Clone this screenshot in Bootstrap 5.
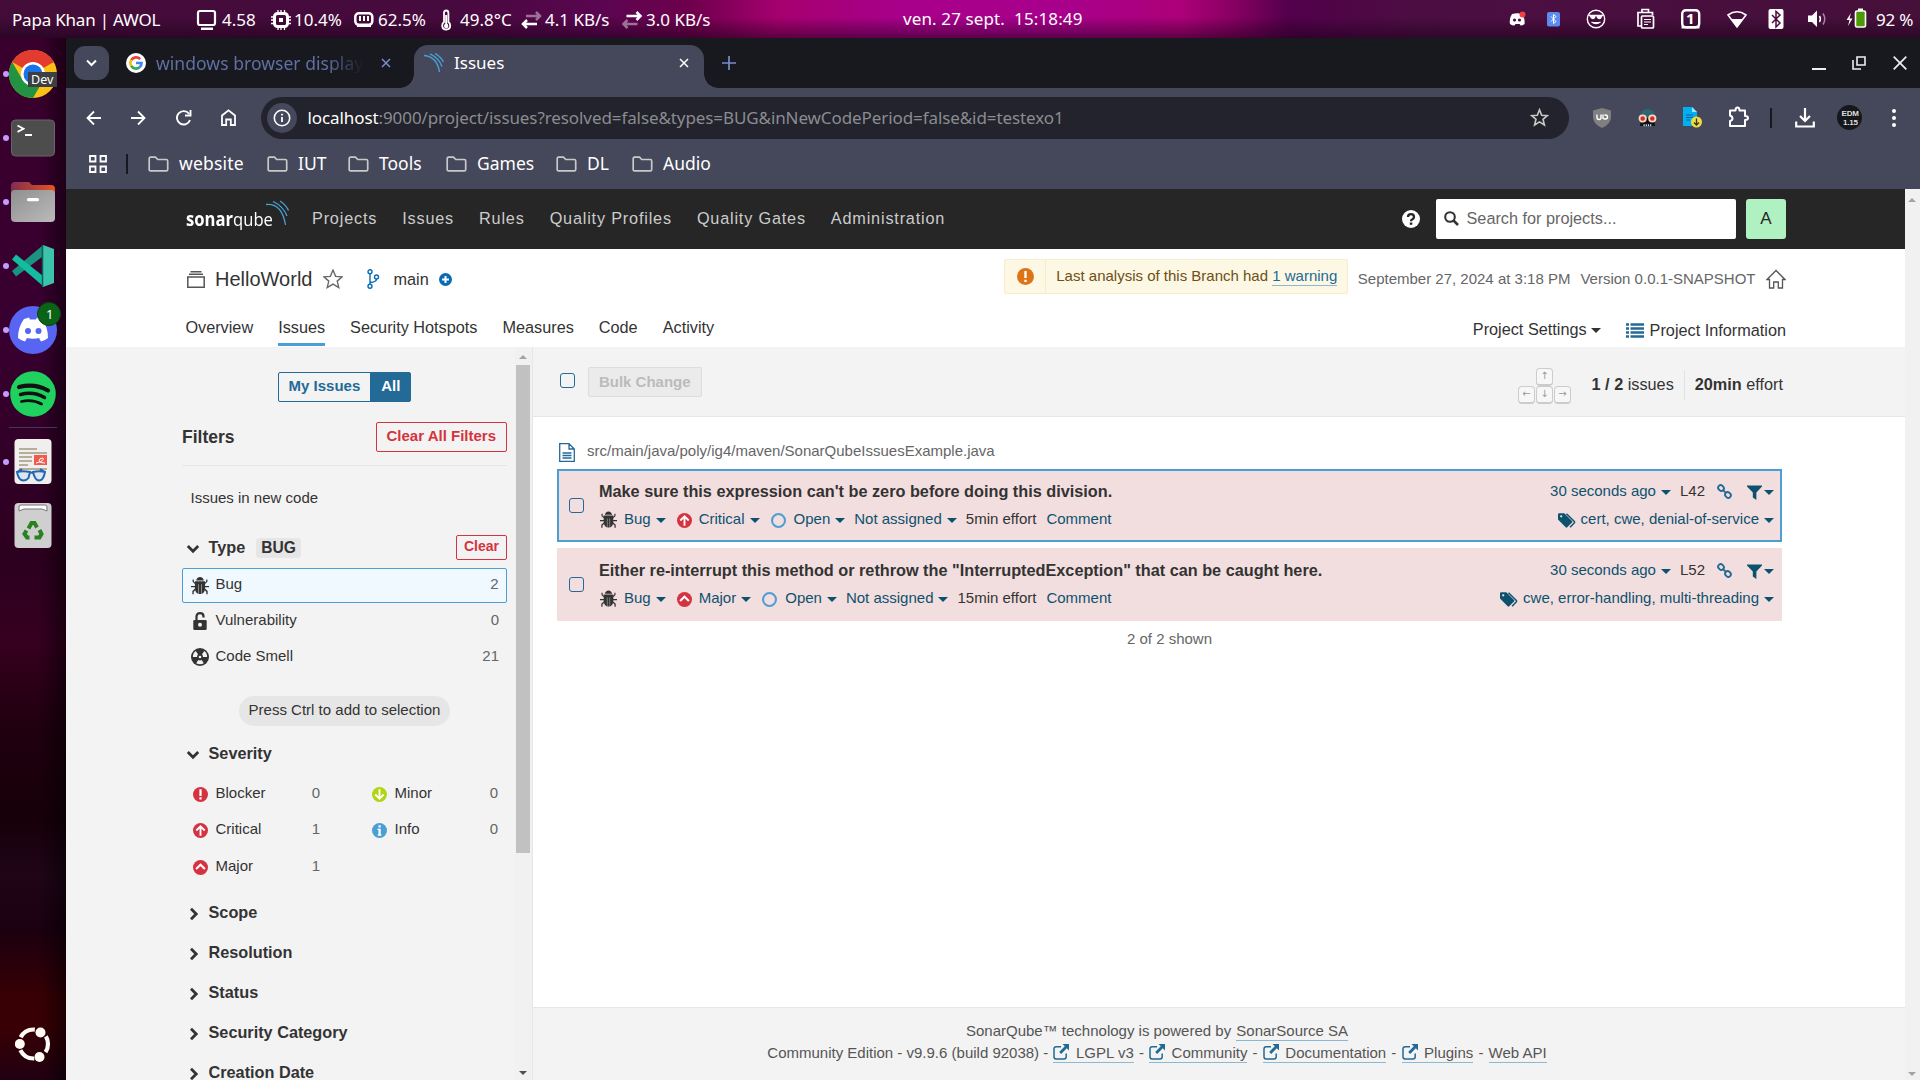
<!DOCTYPE html>
<html lang="en">
<head>
<meta charset="utf-8">
<title>Issues</title>
<link href="https://cdn.jsdelivr.net/npm/bootstrap@5.3.0/dist/css/bootstrap.min.css" rel="stylesheet">
<style>
*{box-sizing:border-box}
html,body{width:1920px;height:1080px;overflow:hidden}
body{font-family:"Liberation Sans",Arial,sans-serif;font-size:15px;line-height:20px;color:#333;background:#180010}
svg{display:block;flex:none}
a{color:#236a97;text-decoration:none}
.ui{font-family:"Noto Sans","Open Sans",sans-serif;font-size:17px;letter-spacing:-.2px}
.nw,.nw *{white-space:nowrap}
.desk{width:1920px;height:1080px}
/* system bar */
.sysbar{height:38px;color:#fff;background:linear-gradient(180deg,rgba(20,0,20,0) 45%,rgba(20,0,20,.5) 100%),linear-gradient(90deg,#430c38 0,#470a3e 460px,#5a0550 600px,#6e004c 690px,#a60070 780px,#a8008a 900px,#a8008c 1060px,#ad0078 1180px,#8a0064 1230px,#52004a 1290px,#4c0e42 1420px,#45103a 100%)}
.sb-name{width:185px;padding:1px 0 0 12px}
#metrics{padding-top:1px}
#metrics span{padding-left:1px;letter-spacing:0}
.clock{width:182px;letter-spacing:.12px}
/* dock */
.dock{width:66px;background:linear-gradient(90deg,rgba(0,0,0,0) 60%,rgba(0,0,0,.5) 100%),linear-gradient(180deg,#3a002d 0,#380030 300px,#2c001f 520px,#360020 600px,#20000f 690px,#170009 780px,#200518 840px,#1b0010 890px,#380004 960px,#380004 990px,#210012 100%);padding-top:12px}
.app{height:48px;margin-bottom:16px;padding-left:9px;position:relative}
.app.run::before{content:"";position:absolute;left:3px;top:21px;width:6px;height:6px;border-radius:50%;background:#c39bff}
.dock hr{margin:-7px 9px 10px;border:0;height:1px;background:#3e3a55;opacity:1}
/* browser */
.tabs{height:50px;background:#17191e;color:#fff}
.tabbtn{width:35px;height:34px;border-radius:11px;background:#45475a;margin:0 17px 0 8px}
.tabA{width:238px;margin-right:50px;color:#616fa3}
.tabA .ttl{width:210px;font-size:17.5px;letter-spacing:.05px;margin-top:-1px;-webkit-mask-image:linear-gradient(90deg,#000 82%,transparent 100%)}
.tabB{width:290px;height:43px;background:#45475a;border-radius:14px 14px 0 0;padding:0 15px 7px 10px;letter-spacing:0;position:relative}
.tabB::before,.tabB::after{content:"";position:absolute;bottom:0;width:14px;height:14px}
.tabB::before{left:-14px;background:radial-gradient(circle at 0 0,transparent 13.5px,#45475a 14px)}
.tabB::after{right:-14px;background:radial-gradient(circle at 100% 0,transparent 13.5px,#45475a 14px)}
.tools{height:59px;background:#45475a;padding-left:20px}
.navi{width:45px}
.omni{width:1308px;height:42px;border-radius:21px;background:#22232c;padding:0 20px 0 6px;margin-left:-5px;margin-right:24px}
.omni .inf{width:30px;height:30px;border-radius:50%;background:#45475a}
.omni .url{color:#8b8c91;margin-left:10.5px;letter-spacing:-.09px}
.exts>*{flex:none}
.marks{height:42px;background:#45475a;padding:0 0 9px 23px;color:#fff;line-height:24px;font-size:17.5px;letter-spacing:0}
.marks .nm{margin-top:-2px}
.vbar{width:2px;height:20px;background:#17191e}
.bk{gap:10px}
/* page */
.sq-nav{height:60px;background:#262626;padding:0 119px 0 120px;color:#ccc;font-size:16.25px;letter-spacing:.81px}
.sq-nav .links{gap:25px;margin-left:22px;padding-bottom:2px}
.wordmark{width:80px;font-family:"Open Sans","Noto Sans",sans-serif;font-size:19px;letter-spacing:0;color:#fff}
.wordmark span{display:inline-block;transform:scaleX(.875);transform-origin:0 50%}
.arcs{margin-top:-13px}
.sq-search{width:300px;height:40px;border-radius:2px;background:#fff;color:#666;letter-spacing:0;padding:0 9px 1px 8px;gap:8px}
.sq-ava{width:40px;height:40px;border-radius:3px;background:#b0f1c1;color:#262626;font-size:17px;letter-spacing:0;margin-left:10px}
.sq-head{height:98px;background:#fff;padding:0 119px 0 120px}
.sq-h1{height:60px}
.pname{font-size:20px;margin:0 11px 0 10px}
.f16{font-size:16.25px}
.warnbox{height:35px;border:1px solid #faebcc;border-radius:2px;background:#fcf8e3;color:#6f4f17;margin-top:-5px}
.warnbox .ic{width:41px;height:33px;border-right:1px solid #f6ecc8}
.warnbox .tx{padding:0 10px;padding-bottom:2px}
.ul{border-bottom:1px solid #8db8d4;padding-bottom:1px}
.gr{color:#666}
.sq-tabs{height:38px;gap:25px;font-size:16.25px;margin-left:-.6px}
.sq-tabs>span{height:37px;line-height:37px;border-bottom:3px solid transparent}
.sq-tabs>span.on{border-color:#4b9fd5}
.caret{width:0;height:0;border:5px solid transparent;border-top:5.5px solid #0e516f;border-bottom:0;margin:2px -1px 0 5px;display:inline-block;flex:none}
.caret.k{border-top-color:#333}
/* sidebar */
.side{width:467px;height:733px;background:#f3f3f3;border-right:1px solid #e6e6e6;overflow:hidden}
.side-in{width:325px;margin-left:116px}
.sbar{width:17px;background:#f1f1f1;margin-left:auto;height:733px;padding-top:8px}
.sbar .th{width:14px;height:488px;background:#c1c1c1;margin:6px 0 0 1px}
.aro{width:0;height:0;border:4.5px solid transparent;margin-left:4px}
.tgl{margin-top:25px;height:30px}
.tgl .b1,.tgl .b2{height:30px;border:1px solid #236a97;font-weight:700;line-height:26px;color:#236a97;padding:0 10px;border-radius:2px 0 0 2px}
.tgl .b2{background:#236a97;color:#fff;border-radius:0 2px 2px 0;margin-left:-1px}
.rbtn{height:30px;border:1px solid #d4333f;border-radius:2px;color:#d4333f;font-weight:700;line-height:26px;padding:0 10px}
.rbtn.sm{height:25px;line-height:21px;padding:0 7px;font-size:14px}
.fl-h{margin-top:20px;padding-bottom:13px;border-bottom:1px solid #e6e6e6;font-weight:700}
.fl-h .t{font-size:17.5px}
.fh{height:40px;font-weight:700;font-size:16.25px}
.fh .ch{width:26.5px;padding-left:4px}
.tagv{height:20px;background:#e6e6e6;border-radius:4px;padding:0 5px;margin-left:11px;line-height:19px;font-size:15.6px}
.innew{padding:22px 0 19px 8.5px}
.fi{height:36.3px;padding:0 8px 3px 8.5px}
.fi svg{margin-right:7px;margin-top:3px}
.fi .n{margin-left:auto;color:#666}
.fi.sel{height:35px;border:1px solid #4b9fd5;border-radius:2px;background:#f0f9ff;padding:0 7.5px 3px 7.5px}
.pill{height:30px;line-height:28px;border-radius:15px;background:#e6e6e6;margin:20px auto 0;width:211px;text-align:center}
.sev{height:109px;margin-top:4px}
.sev .c1{width:147px}
.sev .fi{height:36.2px;padding-right:9px}
.sev .fi svg{margin-left:2px;margin-right:8px}
.sev .c2{width:146px}
.fh .chv{margin:4px 0 0 -1px}
/* main */
.tbar{height:70px;background:#f3f3f3;border-bottom:1px solid #e6e6e6;padding:0 122px 0 27.4px}
.cb{width:15px;height:15px;border:1px solid #236a97;border-radius:3px;flex:none}
.bulk{height:30px;border:1px solid #ddd;background:#ebebeb;border-radius:2px;color:#bbb;font-weight:700;line-height:27px;padding:0 10px;margin-left:12.5px}
.kbds{margin-right:20.5px;margin-top:9px}
.kbd1{width:17px;height:18px;border:1px solid #ccc;border-bottom-width:2px;border-radius:4px;background:#f7f7f7;color:#999;font-size:10px;line-height:14px;text-align:center;font-family:"DejaVu Sans",sans-serif}
.vd{width:1px;height:30px;background:#e2e2e2}
.tbar .f16{padding-top:4px}
.issues{margin:0 123px 0 24px}
.pathrow{height:52px;padding:18px 0 0 2px;color:#666}
.issue{height:73px;background:#f2dede;margin-bottom:6px;border:2px solid #f2dede;color:#0e516f;padding:0 7px 0 10px}
.issue.sel{border-color:#4b9fd5}
.issue .bd{margin-left:15px;padding-bottom:1px}
.issue .ln1{height:28px}
.issue .ln1 .msg{font-size:16.25px;font-weight:700;color:#333}
.issue .ln2{height:28px}
.dk{color:#333}
.foot{height:73px;border-top:1px solid #e6e6e6;background:#f3f3f3;color:#555;padding:12px 123px 0 0;line-height:22px;margin-top:auto}
.foot a{display:inline-block;line-height:18px;border-bottom:1px solid #8db8d4;margin:0 1px}
.foot svg{display:inline-block;vertical-align:-2px;margin-right:6.5px}
.pscroll{width:15px;background:#f1f1f1;padding-top:9px}
</style>
<script src="https://cdn.jsdelivr.net/npm/bootstrap@5.3.0/dist/js/bootstrap.bundle.min.js"></script>
</head>
<body>
<svg width="0" height="0" class="position-absolute">
<defs>
<symbol id="bug" viewBox="0 0 16 16"><path fill="#333" d="M8 0C6.300 0 4.900 1.300 4.600 3h6.800C11.100 1.300 9.700 0 8 0zM3.500 3.700h9v1.200l1-1V2.200h1.100v2.100L12.500 6.300v1.600H16v1.200h-3.500v1.200l2.300 2.200v2.900h-1.200v-2.400l-1.400-1.200c-.3 1.500-1.200 2.600-2.700 3.200V6.500H9.100V15H6.900V6.500H6.500v8.500c-1.500-.6-2.400-1.700-2.700-3.200l-1.400 1.200v2.400H1.200v-2.900l2.300-2.200V9.100H0V7.900h3.500V6.300L1.400 4.300V2.200h1.100v1.700l1 1z"/></symbol>
<symbol id="crit" viewBox="0 0 16 16"><circle cx="8" cy="8" r="8" fill="#d4333f"/><path d="M8 13.500V4M3.500 8 8 3.600 12.500 8" fill="none" stroke="#fff" stroke-width="2"/></symbol>
<symbol id="major" viewBox="0 0 16 16"><circle cx="8" cy="8" r="8" fill="#d4333f"/><path d="M3.300 9.600 8 5l4.700 4.600" fill="none" stroke="#fff" stroke-width="2.200"/></symbol>
<symbol id="blocker" viewBox="0 0 16 16"><circle cx="8" cy="8" r="8" fill="#d4333f"/><path d="M6.800 2.500h2.400V9.500H6.800zM6.800 11h2.400v2.400H6.800z" fill="#fff"/></symbol>
<symbol id="minor" viewBox="0 0 16 16"><circle cx="8" cy="8" r="8" fill="#b0d513"/><path d="M8 2.500V12M3.500 8 8 12.400 12.500 8" fill="none" stroke="#fff" stroke-width="2"/></symbol>
<symbol id="info" viewBox="0 0 16 16"><circle cx="8" cy="8" r="8" fill="#4b9fd5"/><path d="M6.900 2.500h2.400v2.300H6.900zM5.800 6h3.500v6H10v1.500H6.200V12h.7V7.400H5.800z" fill="#fff"/></symbol>
<symbol id="link" viewBox="0 0 16 16"><g fill="none" stroke="#236a97" stroke-width="2"><rect x="-3.200" y="-2.700" width="6.400" height="5.400" rx="2.700" transform="translate(4.300 4.300) rotate(45)"/><rect x="-3.200" y="-2.700" width="6.400" height="5.400" rx="2.700" transform="translate(11.700 11.700) rotate(45)"/><path d="M6 6l4 4"/></g></symbol>
<symbol id="filt" viewBox="0 0 16 16"><path fill="#0e516f" d="M0 .5h16v1.200L10 7.900V16l-3.800-2.600V7.900L0 1.700z"/></symbol>
<symbol id="tags" viewBox="0 0 18 15"><path fill="#0e516f" d="M0 1.400Q0 .3 1.100.3H6.300L14 8a1 1 0 0 1 0 1.500l-4.800 4.800a1 1 0 0 1-1.500 0L0 6.500zM3.200 2.200a1.100 1.100 0 1 0 0 2.300 1.100 1.100 0 0 0 0-2.300z" fill-rule="evenodd"/><path fill="none" stroke="#0e516f" stroke-width="1.400" d="M8.500.8l7.900 7.600q.6.700 0 1.300l-4.300 4.500"/></symbol>
<symbol id="ext" viewBox="0 0 16 16"><path d="M8 2.800H3.200Q1 2.800 1 5v7.800Q1 15 3.200 15H11q2.200 0 2.200-2.200V9.500" fill="none" stroke="#236a97" stroke-width="1.500"/><path fill="#236a97" d="M9.500 0H16v6.500l-2.200-2.200-5.600 5.600-2-2 5.600-5.700z"/></symbol>
<symbol id="chd" viewBox="0 0 14 10"><path d="M1.800 2 7 7.200 12.200 2" fill="none" stroke="#333" stroke-width="2.800"/></symbol>
<symbol id="chr" viewBox="0 0 10 14"><path d="M2 1.800 7.200 7 2 12.200" fill="none" stroke="#333" stroke-width="2.800"/></symbol>
<symbol id="fold" viewBox="0 0 21 16"><path d="M1.200 2.500Q1.200 1.200 2.500 1.200H7.500l2.200 2.300h8.600q1.400 0 1.400 1.400v8.500q0 1.400-1.400 1.400H2.500q-1.300 0-1.300-1.400z" fill="none" stroke="#c9c9c9" stroke-width="1.700"/></symbol>
<symbol id="xx" viewBox="0 0 10 10"><path d="M1 1l8 8M9 1 1 9" stroke="currentColor" stroke-width="1.500" fill="none"/></symbol>
<symbol id="opn" viewBox="0 0 16 16"><circle cx="8" cy="8" r="6.900" fill="none" stroke="#4b9fd5" stroke-width="2.200"/></symbol>
</defs></svg>

<div class="desk d-flex flex-column nw">
<header class="sysbar ui d-flex align-items-center position-relative">
  <div class="sb-name">Papa Khan | AWOL</div>
  <div class="d-flex align-items-center" id="metrics">
    <svg class="ms-2 ps-0" width="28" height="22" viewBox="0 0 28 22"><path d="M7 2h13q2 0 2 2v10q0 2-2 2H7q-2 0-2-2V4q0-2 2-2z" fill="none" stroke="#fff" stroke-width="2.200"/><path d="M8 18.500h12v2.500H8z" fill="#fff"/></svg>
    <span style="width:49px">4.58</span>
    <svg width="23" height="22" viewBox="0 0 23 22"><rect x="4.500" y="4.500" width="13" height="13" rx="3" fill="none" stroke="#fff" stroke-width="3"/><rect x="9" y="9" width="4" height="4" fill="#fff"/><path d="M8 1v3M8 18v3M11 1v3M11 18v3M14.500 1v3M14.500 18v3M1 8h3M1 11h3M1 14.500h3M18 8h3M18 11h3M18 14.500h3" stroke="#fff" stroke-width="1.300"/></svg>
    <span style="width:61px">10.4%</span>
    <svg width="23" height="22" viewBox="0 0 23 22"><rect x="1.300" y="4.300" width="17" height="11.500" rx="3.500" fill="none" stroke="#fff" stroke-width="2.500"/><path d="M6 7v5M10 7v5M14 7v5M3 17h14" stroke="#fff" stroke-width="2"/></svg>
    <span style="width:63px">62.5%</span>
    <svg width="19" height="22" viewBox="0 0 19 22"><path d="M4 4q0-2.500 2.200-2.500T8.400 4v9q1.800 1.300 1.800 3.500 0 4-4 4t-4-4Q2.200 14.300 4 13z" fill="none" stroke="#fff" stroke-width="1.800"/><path d="M6.200 6v11" stroke="#fff" stroke-width="2"/><circle cx="6.200" cy="17" r="2.200" fill="#fff"/></svg>
    <span style="width:62px">49.8°C</span>
    <svg width="23" height="22" viewBox="0 0 23 22"><path d="M5 7h14M15 3l4 4-4 4" fill="none" stroke="#9b7296" stroke-width="2.500"/><path d="M16 15H2M6 11l-4 4 4 4" fill="none" stroke="#fff" stroke-width="2.500"/></svg>
    <span style="width:77px">4.1 KB/s</span>
    <svg width="24" height="22" viewBox="0 0 23 22"><path d="M5 7h14M15 3l4 4-4 4" fill="none" stroke="#fff" stroke-width="2.500"/><path d="M16 15H2M6 11l-4 4 4 4" fill="none" stroke="#9b7296" stroke-width="2.500"/></svg>
    <span style="width:258px">3.0 KB/s</span>
  </div>
  <div class="clock">ven. 27 sept. &nbsp;15:18:49</div>
  <svg class="ms-auto" width="367" height="38" viewBox="0 0 367 38">
    <path d="M3 14q6-1.500 10 0 3 4 2.600 10-2 1.500-4 1.500l-1-1.500H6.500l-1 1.500q-2.500 0-4.500-1.500Q0 19 3 14z" fill="#fff"/><circle cx="5.500" cy="20" r="1.600" fill="#4b0c3e"/><circle cx="10.500" cy="20" r="1.600" fill="#4b0c3e"/><circle cx="13.500" cy="14.500" r="3" fill="#f23f42"/>
    <rect x="38" y="12" width="13" height="14.500" rx="2" fill="#5b8bf0"/><path d="M42 16.500l5 5-2.500 2v-9l2.500 2-5 5" stroke="#fff" fill="none"/>
    <circle cx="87" cy="19" r="8.700" fill="none" stroke="#fff" stroke-width="1.400"/><path d="M80 15.500h14M81.500 16h4.500q-.3 2.500-2.200 2.500T81.500 16zM88 16h4.500q-.3 2.500-2.200 2.500T88 16zM82.500 22q4.500 3 9 0" fill="#fff" stroke="#fff" stroke-width="1.300"/>
    <path d="M133 26h-4V12.500h14.500V15M133 12V9.500h6.500V12" fill="none" stroke="#fff" stroke-width="1.700"/><rect x="132.500" y="16" width="12" height="12" rx="1" fill="none" stroke="#fff" stroke-width="1.700"/><path d="M135 19.500h7M135 22h7M135 24.500h4" stroke="#fff" stroke-width="1.200"/>
    <rect x="173.200" y="10.200" width="17" height="17" rx="3.500" fill="none" stroke="#fff" stroke-width="2.400"/><path d="M172.500 26h18v2.500h-18z" fill="#fff"/><text x="177" y="24" font-size="15" font-family="Noto Sans" font-weight="700" fill="#fff">1</text>
    <path d="M219 15q9-6.500 18 0L228 27z" fill="none" stroke="#fff" stroke-width="1.600"/><path d="M222.500 19h11L228 27z" fill="#fff"/>
    <rect x="259.500" y="9" width="15" height="20" rx="2" fill="#fff"/><path d="M263 15l8 8-4 4V11.500l4 3.500-8 8" fill="none" stroke="#4b0c3e" stroke-width="1.500"/>
    <path d="M299 15.500h4l5-5V27l-5-5h-4z" fill="#fff"/><path d="M310.500 16q1.800 3 0 6" stroke="#fff" fill="none" stroke-width="1.500"/><path d="M314 13.500q3.500 5.500 0 11" stroke="#a884a2" fill="none" stroke-width="1.500"/>
    <path d="M342 13l-4.500 7h3l-1.500 6 4.500-7.500h-3z" fill="#fff"/><rect x="346.500" y="11" width="10" height="16" rx="1.500" fill="#4e9a06" stroke="#fff" stroke-width="1.600"/><path d="M349 8.500h5V11h-5z" fill="#fff"/>
  </svg>
  <span style="width:44px;margin-top:1px">92 %</span>
</header>

<div class="d-flex flex-grow-1">
<aside class="dock d-flex flex-column">
  <div class="app run"><svg width="48" height="48" viewBox="0 0 48 48"><circle cx="24" cy="24" r="24" fill="#fbc116"/><path d="M24 24 3.200 12A24 24 0 0 1 44.800 12z" fill="#e33b2e"/><path d="M3.200 12A24 24 0 0 0 24 48L34.400 30H13.600z" fill="#229342"/><path d="M24 12h21" stroke="#e33b2e"/><circle cx="24" cy="24" r="12" fill="#fff"/><circle cx="24" cy="24" r="9.500" fill="#1a73e8"/><rect x="19" y="22" width="29" height="15" fill="#3c4043"/><text x="22" y="34" font-family="Noto Sans" font-size="12.500" fill="#fff">Dev</text></svg></div>
  <div class="app run"><svg width="48" height="48" viewBox="0 0 48 48"><rect x="2.500" y="6" width="43" height="36" rx="4" fill="#4d4d4d" stroke="#666"/><path d="M8.500 11.500l6 3.200-6 3.200M16 21h7" fill="none" stroke="#fff" stroke-width="1.800"/></svg></div>
  <div class="app run"><svg width="48" height="48" viewBox="0 0 48 48"><linearGradient id="fo"><stop stop-color="#7e2f52"/><stop offset="1" stop-color="#e95420"/></linearGradient><path d="M2 8q0-4 4-4h14l3 3h19q4 0 4 4v14H2z" fill="url(#fo)"/><linearGradient id="fg" x2="1" y2="1"><stop stop-color="#8f8f8f"/><stop offset="1" stop-color="#bbb"/></linearGradient><rect x="2" y="12" width="44" height="32" rx="4" fill="url(#fg)"/><rect x="18" y="20" width="12" height="3.200" rx="1.500" fill="#fff"/></svg></div>
  <div class="app run"><svg width="48" height="48" viewBox="0 0 48 48"><path d="M3 29l4 5.500L33 15V4z" fill="#1a9480"/><path d="M3 17.500l4-5L34 34v10z" fill="#12bda0"/><path d="M34 3l11 4v34l-11 4z" fill="#3cc3ac"/><path d="M33.500 3v42" stroke="#0b5f55" stroke-width="1.500"/></svg></div>
  <div class="app run"><svg width="54" height="54" viewBox="0 -6 54 54" style="margin-top:-6px"><circle cx="24" cy="24" r="24" fill="#5865f2"/><path d="M15 13q3-1 5-1.500l1 2h6l1-2q2.500.5 5 1.500 6 8 6 19-3 2.500-7 3.500l-2-3.500q-6 1.500-12 0l-2 3.500q-4-1-7-3.500 0-11 6-19z" fill="#fff"/><circle cx="19" cy="25" r="3" fill="#5865f2"/><circle cx="29.500" cy="25" r="3" fill="#5865f2"/><circle cx="40" cy="8" r="11.500" fill="#0a6317" stroke="#0a4512"/><text x="37" y="13" font-family="Noto Sans" font-size="13" fill="#fff">1</text></svg></div>
  <div class="app run"><svg width="48" height="48" viewBox="0 0 48 48"><circle cx="24" cy="24" r="22.800" fill="#1fd15e"/><g fill="none" stroke="#121212" stroke-linecap="round"><path d="M10 17q16-4 29 3.500" stroke-width="4.200"/><path d="M11.500 24.500q13-3.500 24 3" stroke-width="3.500"/><path d="M12.500 31.500q11-2.500 20 2.500" stroke-width="2.800"/></g></svg></div>
  <hr>
  <div class="app run"><svg width="48" height="48" viewBox="0 0 48 48"><rect x="5.500" y="1" width="37" height="45" rx="4" fill="#f0efee"/><path d="M10 11h18M10 15h28M10 19h13M10 23h13M10 27h9M10 31h28" stroke="#b5ae9b" stroke-width="1.800"/><rect x="25" y="17" width="13" height="10" fill="#f25a50"/><path d="M27 25q9-2 7-5-4 0-4 3 0 2 6 2" fill="none" stroke="#fff"/><path d="M8 34q6-1.500 13 0l-1.500 6q-2 2.500-5 2.500-5 0-6.500-8.500zM24 34q6-1.500 12 0-1.500 8.500-6 8.500-4 0-6-8.500zM20 35q2-1 4 0M8 34l5-3M36 34l-5-3" fill="#dde6ef" stroke="#2367b3" stroke-width="2"/></svg></div>
  <div class="app"><svg width="48" height="48" viewBox="0 0 48 48"><rect x="5.500" y="1" width="37" height="45" rx="4" fill="#cfcfcf"/><path d="M10 9V5q0-2 2-2h24q2 0 2 2v4l-5-2H15z" fill="#fff" stroke="#777"/><g fill="none" stroke="#27821f" stroke-width="4"><path d="M19.500 26.500l3-5.500h3l2.500 4.500M30.500 28l2 4-2 3.500h-5M20.500 35.500h-2.500l-2.500-3.500 2-3.500"/></g></svg></div>
  <div class="mt-auto" style="padding:0 0 18px 15px"><svg width="36" height="36" viewBox="0 0 36 36"><circle cx="18.500" cy="18" r="14.500" fill="none" stroke="#fffcf5" stroke-width="4.200" stroke-dasharray="17 13.370" stroke-dashoffset="8.500"/><g fill="#fffcf5"><circle cx="4.800" cy="18" r="5"/><circle cx="25.500" cy="6.500" r="5"/><circle cx="24.500" cy="31" r="5"/></g></svg></div>
</aside>

<section class="d-flex flex-column flex-grow-1">
  <div class="tabs ui d-flex align-items-center">
    <div class="tabbtn d-flex align-items-center justify-content-center"><svg width="11" height="8" viewBox="0 0 11 8"><path d="M1 1.500 5.500 6 10 1.500" fill="none" stroke="#fff" stroke-width="2"/></svg></div>
    <div class="tabA d-flex align-items-center"><svg width="20" height="20" viewBox="0 0 20 20"><circle cx="10" cy="10" r="10" fill="#fff"/><g fill="none" stroke-width="2.600"><path d="M14.200 6.200A5.600 5.600 0 0 0 5.200 7.200" stroke="#ea4335"/><path d="M5.200 7.200a5.600 5.600 0 0 0 0 5.600" stroke="#fbbc05"/><path d="M5.200 12.800A5.600 5.600 0 0 0 13.600 14.300" stroke="#34a853"/><path d="M13.600 14.300Q15.600 12.700 15.600 10H10" stroke="#4285f4"/></g></svg><span class="ttl" style="margin-left:10px">windows browser display</span></div>
    <svg style="margin-left:-33px;margin-right:23px;color:#7a8bd0" width="10" height="10"><use href="#xx"/></svg>
    <div class="tabB d-flex align-items-center align-self-end"><svg width="20" height="20" viewBox="0 0 20 20"><path d="M0 2.500Q13 3.500 15.500 19M6 .8Q15 5 18 13.500M11 .5Q17 4 19.500 9" fill="none" stroke="#4b9fd5" stroke-width="1.400"/></svg><span style="margin-left:10px">Issues</span><svg class="ms-auto" width="10" height="10"><use href="#xx"/></svg></div>
    <svg style="margin-left:18px" width="14" height="14" viewBox="0 0 14 14"><path d="M7 0v14M0 7h14" stroke="#7a8bd0" stroke-width="1.700"/></svg>
    <div class="ms-auto d-flex align-items-center" style="padding-right:13px"><svg width="14" height="14"><path d="M0 13h14" stroke="#eee" stroke-width="2"/></svg><svg style="margin:0 27px 0 26px" width="14" height="14" viewBox="0 0 14 14"><path d="M5 1h8v8H5zM1 4v9h8" fill="none" stroke="#eee" stroke-width="1.600"/></svg><svg width="14" height="14" viewBox="0 0 10 10"><path d="M.5.5l9 9M9.500.5l-9 9" stroke="#eee" stroke-width="1.200"/></svg></div>
  </div>
  <div class="tools ui d-flex align-items-center text-white">
    <div class="navi"><svg width="15" height="16" viewBox="0 0 15 16"><path d="M15 8H1.500M8 1.500 1.500 8 8 14.500" fill="none" stroke="#fff" stroke-width="1.800"/></svg></div>
    <div class="navi"><svg width="15" height="16" viewBox="0 0 15 16"><path d="M0 8h13.500M7 1.500 13.500 8 7 14.500" fill="none" stroke="#fff" stroke-width="1.800"/></svg></div>
    <div class="navi"><svg width="16" height="16" viewBox="0 0 16 16"><path d="M14 10A6.700 6.700 0 1 1 13 3.800M14.500 0v5.500H9" fill="none" stroke="#fff" stroke-width="1.900"/></svg></div>
    <div class="navi"><svg width="15" height="17" viewBox="0 0 15 17"><path d="M1 6.500 7.500 1.300 14 6.500V16H9.800v-5.500H5.200V16H1z" fill="none" stroke="#fff" stroke-width="1.800"/></svg></div>
    <div class="omni d-flex align-items-center"><span class="inf d-flex align-items-center justify-content-center"><svg width="18" height="18" viewBox="0 0 18 18"><circle cx="9" cy="9" r="7.700" fill="none" stroke="#fff" stroke-width="1.600"/><path d="M9 8v5M9 4.800v1.800" stroke="#fff" stroke-width="1.800"/></svg></span><span class="url"><span class="text-white">localhost</span>:9000/project/issues?resolved=false&amp;types=BUG&amp;inNewCodePeriod=false&amp;id=testexo1</span><svg class="ms-auto" width="19" height="19" viewBox="0 0 19 19"><path d="M9.500 1.800l2.200 5.400 5.700.4-4.400 3.700 1.400 5.700-4.900-3.100L4.600 17 6 11.300 1.600 7.600l5.700-.4z" fill="none" stroke="#c9c9c9" stroke-width="1.600"/></svg></div>
    <div class="d-flex align-items-center exts">
      <svg width="18" height="20" viewBox="0 0 18 20"><path d="M9 0l9 2.500V9q0 7-9 11Q0 16 0 9V2.500z" fill="#808080"/><path d="M4 6.500v3q0 2 2 2t2-2v-3M10 6.500v4.500M11.500 7h1q2 0 2 2t-2 2h-2" fill="none" stroke="#fff" stroke-width="1.400"/></svg>
      <svg style="margin-left:27px" width="19" height="20" viewBox="0 0 19 20"><path d="M2 9q0-8 7.500-8T17 9z" fill="#2f6475"/><path d="M3 10h13l1 8H2z" fill="#111"/><circle cx="4.700" cy="10.500" r="3.200" fill="#d32f2f" stroke="#f5d9c0" stroke-width="1.800"/><circle cx="14.300" cy="10.500" r="3.200" fill="#d32f2f" stroke="#f5d9c0" stroke-width="1.800"/><path d="M5.500 17.300h8" stroke="#bfe8f0" stroke-width="2" stroke-dasharray="1.200 1"/></svg>
      <svg style="margin-left:26px" width="20" height="22" viewBox="0 0 20 22"><path d="M0 0h9l5 5v14H0z" fill="#00b0f5"/><path d="M9 0l5 5H9z" fill="#9be4ff"/><path d="M3 8h7M3 10.500h7M3 13h4" stroke="#0d5f96" stroke-width="1.200"/><circle cx="13.500" cy="15" r="5.500" fill="#f4dc3a"/><path d="M13.500 11.500v6M11 15.500l2.500 2.500 2.500-2.500" fill="none" stroke="#333" stroke-width="1.300"/></svg>
      <svg style="margin-left:25px;margin-top:-2px" width="21" height="22" viewBox="0 0 21 22"><path d="M2 4.500h5.500Q7.500 1.500 9.500 1.500t2 3H17v5.500q3 0 3 2t-3 2v6H2v-5q2.500-.5 2.500-2.500T2 9.500z" fill="none" stroke="#fff" stroke-width="2" stroke-linejoin="round"/></svg>
      <span class="vbar" style="margin:0 23px 0 21px"></span>
      <svg width="20" height="20" viewBox="0 0 20 20"><path d="M10 0v13M5 8l5 5 5-5M1.200 13.500V18.500H18.800V13.500" fill="none" stroke="#fff" stroke-width="2.200"/></svg>
      <svg style="margin-left:22px" width="25" height="25" viewBox="0 0 25 25"><circle cx="12.500" cy="12.500" r="12.500" fill="#16171a"/><g font-family="Liberation Sans" font-weight="700" font-size="8" fill="#ddd"><text x="4.500" y="11">EDM</text><text x="6" y="20">1.15</text></g></svg>
      <svg style="margin-left:30px" width="4" height="18" viewBox="0 0 4 18"><g fill="#fff"><circle cx="2" cy="2" r="2"/><circle cx="2" cy="9" r="2"/><circle cx="2" cy="16" r="2"/></g></svg>
    </div>
  </div>
  <div class="marks ui d-flex align-items-center">
    <svg width="18" height="18" viewBox="0 0 18 18"><path d="M1 1h5.500v5.500H1zM11.500 1H17v5.500h-5.500zM1 11.500h5.500V17H1zM11.500 11.500H17V17h-5.500z" fill="none" stroke="#fff" stroke-width="1.800"/></svg>
    <span class="vbar" style="margin:0 20px 0 19px"></span>
    <span class="d-flex align-items-center bk" style="width:119px"><svg width="21" height="16"><use href="#fold"/></svg><span class="nm" style="letter-spacing:.2px">website</span></span>
    <span class="d-flex align-items-center bk" style="width:81px"><svg width="21" height="16"><use href="#fold"/></svg><span class="nm">IUT</span></span>
    <span class="d-flex align-items-center bk" style="width:98px"><svg width="21" height="16"><use href="#fold"/></svg><span class="nm">Tools</span></span>
    <span class="d-flex align-items-center bk" style="width:110px"><svg width="21" height="16"><use href="#fold"/></svg><span class="nm">Games</span></span>
    <span class="d-flex align-items-center bk" style="width:76px"><svg width="21" height="16"><use href="#fold"/></svg><span class="nm">DL</span></span>
    <span class="d-flex align-items-center bk"><svg width="21" height="16"><use href="#fold"/></svg><span class="nm">Audio</span></span>
  </div>

  <div class="d-flex flex-grow-1">
  <div class="flex-grow-1">
    <nav class="sq-nav d-flex align-items-center">
      <div class="wordmark"><span><b>sonar</b>qube</span></div>
      <svg class="arcs" width="24" height="26" viewBox="0 0 24 26"><path d="M0 4.500Q16 3 19.500 25M7 1.500Q17 6 21 16M14 1Q20 5 22.500 10.500" fill="none" stroke="#4b9fd5" stroke-width="1.300"/></svg>
      <div class="d-flex links"><span>Projects</span><span>Issues</span><span>Rules</span><span>Quality Profiles</span><span>Quality Gates</span><span>Administration</span></div>
      <svg class="ms-auto" style="margin-right:16px" width="18" height="18" viewBox="0 0 18 18"><circle cx="9" cy="9" r="9" fill="#fff"/><path d="M6 7Q6 4.200 9 4.200T12 7q0 1.500-1.600 2.300Q9 10 9 11.300" fill="none" stroke="#262626" stroke-width="2.300"/><rect x="7.800" y="12.500" width="2.500" height="2.300" fill="#262626"/></svg>
      <div class="sq-search d-flex align-items-center"><svg width="15" height="15" viewBox="0 0 15 15"><circle cx="6" cy="6" r="4.800" fill="none" stroke="#333" stroke-width="2.100"/><path d="M9.500 9.500l4.500 4.500" stroke="#333" stroke-width="2.500"/></svg><span style="margin:-1px 0 0 -.5px">Search for projects...</span></div>
      <div class="sq-ava d-flex align-items-center justify-content-center">A</div>
    </nav>
    <div class="sq-head">
      <div class="sq-h1 d-flex align-items-center">
        <svg style="margin-left:1px" width="18" height="17" viewBox="0 0 18 17"><path d="M.8 6h16.400v10.200H.8zM2 3.300h14M3.500.8h11" fill="none" stroke="#555" stroke-width="1.500"/></svg>
        <span class="pname">HelloWorld</span>
        <svg width="20" height="20" viewBox="0 0 19 19"><path d="M9.500 1l2.500 6 6.200.5-4.700 4 1.500 6.200-5.500-3.300L4 17.700l1.500-6.200-4.700-4L7 7z" fill="none" stroke="#666" stroke-width="1.300"/></svg>
        <svg style="margin-left:23px" width="14" height="20" viewBox="0 0 14 20"><g fill="none" stroke="#0a6bb5" stroke-width="1.400"><circle cx="4" cy="2.800" r="2"/><circle cx="4" cy="17.200" r="2"/><circle cx="10.500" cy="8" r="2"/><path d="M4 5v10M10.500 10q0 3-6.500 3.500"/></g></svg>
        <span class="f16" style="margin:0 10px 0 13px">main</span>
        <svg width="13" height="13" viewBox="0 0 13 13"><circle cx="6.500" cy="6.500" r="6.500" fill="#0a6bb5"/><path d="M6.500 3v7M3 6.500h7" stroke="#fff" stroke-width="2"/></svg>
        <div class="warnbox ms-auto d-flex align-items-center"><span class="ic d-flex align-items-center justify-content-center"><svg width="17" height="17" viewBox="0 0 16 16"><circle cx="8" cy="8" r="8" fill="#dd7518"/><path d="M6.900 2.800h2.200V9.500H6.900zM6.900 11h2.200v2.200H6.900z" fill="#fff"/></svg></span><span class="tx">Last analysis of this Branch had <a class="ul">1 warning</a></span></div>
        <span class="gr" style="margin:0 10px 0 9.500px">September 27, 2024 at 3:18 PM</span><span class="gr" style="margin-right:10.500px">Version 0.0.1-SNAPSHOT</span>
        <svg width="20" height="20" viewBox="0 0 20 20"><path d="M1 10.500 10 1.500l9 9h-2.500V19h-4.200v-6H7.700v6H3.500v-8.500z" fill="none" stroke="#555" stroke-width="1.300"/></svg>
      </div>
      <div class="d-flex sq-tabs"><span>Overview</span><span class="on">Issues</span><span>Security Hotspots</span><span>Measures</span><span>Code</span><span>Activity</span>
        <div class="ms-auto d-flex align-items-center pt-1"><span style="margin-top:-2px">Project Settings</span><i class="caret k" style="margin:0 25px 0 4px"></i><svg width="18" height="15" viewBox="0 0 18 15"><path d="M0 1.500h3M4.500 1.500H18M0 5.500h3M4.500 5.500H18M0 9.500h3M4.500 9.500H18M0 13.500h3M4.500 13.500H18" stroke="#236a97" stroke-width="2.400"/></svg><a style="margin-left:6px">Project Information</a></div>
      </div>
    </div>
    <div class="d-flex">
      <aside class="side d-flex">
        <div class="side-in">
          <div class="tgl d-flex justify-content-center"><span class="b1">My Issues</span><span class="b2">All</span></div>
          <div class="fl-h d-flex justify-content-between align-items-center"><span class="t">Filters</span><span class="rbtn">Clear All Filters</span></div>
          <div class="innew">Issues in new code</div>
          <div class="fh d-flex align-items-center" style="height:41px"><span class="ch"><svg style="margin-top:2px" width="14" height="10"><use href="#chd"/></svg></span><span style="margin-top:-2px">Type</span><span class="tagv">BUG</span><span class="rbtn sm ms-auto">Clear</span></div>
          <div class="fi sel d-flex align-items-center"><svg width="18" height="18"><use href="#bug"/></svg>Bug<span class="n">2</span></div>
          <div class="fi d-flex align-items-center"><svg width="18" height="18" viewBox="0 0 18 18"><path d="M5.500 8V4.500q0-3.300 3.500-3.300t3.500 3.300V5.500" fill="none" stroke="#333" stroke-width="2.200"/><path d="M3.500 8h11q1.200 0 1.200 1.200v7.600q0 1.200-1.200 1.200h-11q-1.200 0-1.200-1.200V9.200Q2.300 8 3.500 8z" fill="#333"/><circle cx="9" cy="12.800" r="2" fill="#f3f3f3"/></svg>Vulnerability<span class="n">0</span></div>
          <div class="fi d-flex align-items-center"><svg width="18" height="18" viewBox="0 0 18 18"><circle cx="9" cy="9" r="9" fill="#333"/><g fill="#f3f3f3"><path d="M7 6.300 4.700 3.100Q1.800 5.200 1.900 9H6Q6 7.200 7 6.300zM11 6.300l2.300-3.200Q16.200 5.200 16.100 9H12Q12 7.200 11 6.300zM7.300 12 5.200 15.200Q9 17.300 12.800 15.200L10.700 12Q9 12.800 7.300 12z"/><circle cx="9" cy="9" r="1.300"/></g></svg>Code Smell<span class="n">21</span></div>
          <div class="pill">Press Ctrl to add to selection</div>
          <div class="fh d-flex align-items-center" style="margin-top:7px"><span class="ch"><svg style="margin-top:4px" width="14" height="10"><use href="#chd"/></svg></span>Severity</div>
          <div class="sev d-flex justify-content-between"><div class="c1">
            <div class="fi d-flex align-items-center"><svg width="15" height="15"><use href="#blocker"/></svg>Blocker<span class="n">0</span></div>
            <div class="fi d-flex align-items-center"><svg width="15" height="15"><use href="#crit"/></svg>Critical<span class="n">1</span></div>
            <div class="fi d-flex align-items-center"><svg width="15" height="15"><use href="#major"/></svg>Major<span class="n">1</span></div></div>
            <div class="c2">
            <div class="fi d-flex align-items-center"><svg width="15" height="15"><use href="#minor"/></svg>Minor<span class="n">0</span></div>
            <div class="fi d-flex align-items-center"><svg width="15" height="15"><use href="#info"/></svg>Info<span class="n">0</span></div></div></div>
          <div class="fh d-flex align-items-center" style="margin-top:6px"><span class="ch ps-2"><svg class="chv" width="10" height="14"><use href="#chr"/></svg></span>Scope</div>
          <div class="fh d-flex align-items-center"><span class="ch ps-2"><svg class="chv" width="10" height="14"><use href="#chr"/></svg></span>Resolution</div>
          <div class="fh d-flex align-items-center"><span class="ch ps-2"><svg class="chv" width="10" height="14"><use href="#chr"/></svg></span>Status</div>
          <div class="fh d-flex align-items-center"><span class="ch ps-2"><svg class="chv" width="10" height="14"><use href="#chr"/></svg></span>Security Category</div>
          <div class="fh d-flex align-items-center"><span class="ch ps-2"><svg class="chv" width="10" height="14"><use href="#chr"/></svg></span>Creation Date</div>
        </div>
        <div class="sbar d-flex flex-column"><i class="aro" style="border-bottom-color:#a3a3a3;border-top:0"></i><div class="th"></div><i class="aro mt-auto" style="border-top-color:#505050;margin-bottom:1px"></i></div>
      </aside>
      <main class="flex-grow-1 d-flex flex-column bg-white">
        <div class="tbar d-flex align-items-center"><span class="cb" style="margin-top:-3px"></span><span class="bulk">Bulk Change</span>
          <div class="kbds ms-auto d-flex flex-column align-items-center"><span class="kbd1">↑</span><div class="d-flex" style="gap:1px"><span class="kbd1">←</span><span class="kbd1">↓</span><span class="kbd1">→</span></div></div>
          <span class="f16"><b>1 / 2</b> issues</span><span class="vd" style="margin:6px 10px 0"></span><span class="f16"><b>20min</b> effort</span></div>
        <div class="issues">
          <div class="pathrow d-flex align-items-center"><svg width="16" height="19" viewBox="0 0 16 19"><path d="M.7.7H10l5.300 5.300v12.300H.7zM10 .7V6h5.300M3.500 10h9M3.500 12.500h9M3.500 15h9" fill="none" stroke="#236a97" stroke-width="1.300"/></svg><span style="margin:-2px 0 0 12px">src/main/java/poly/ig4/maven/SonarQubeIssuesExample.java</span></div>
          <div class="issue sel d-flex align-items-center"><span class="cb"></span><div class="bd flex-grow-1">
            <div class="ln1 d-flex align-items-center"><span class="msg">Make sure this expression can't be zero before doing this division.</span><span class="ms-auto">30 seconds ago</span><i class="caret"></i><span class="dk" style="margin:0 12px 0 10px">L42</span><svg width="15" height="15"><use href="#link"/></svg><svg style="margin:2px 0 0 15px" width="15" height="15"><use href="#filt"/></svg><i class="caret" style="margin-left:2px"></i></div>
            <div class="ln2 d-flex align-items-center"><svg style="margin:2px 7px 0 1px" width="17" height="18"><use href="#bug"/></svg>Bug<i class="caret"></i><svg style="margin:2px 7px 0 12px" width="15" height="15"><use href="#crit"/></svg>Critical<i class="caret"></i><svg style="margin:2px 8px 0 12px" width="15" height="15"><use href="#opn"/></svg>Open<i class="caret"></i><span style="margin-left:10px">Not assigned</span><i class="caret"></i><span class="dk" style="margin:0 10px">5min effort</span>Comment<svg class="ms-auto" style="margin-right:5px;margin-top:3px" width="18" height="15"><use href="#tags"/></svg>cert, cwe, denial-of-service<i class="caret"></i></div></div></div>
          <div class="issue d-flex align-items-center"><span class="cb"></span><div class="bd flex-grow-1">
            <div class="ln1 d-flex align-items-center"><span class="msg">Either re-interrupt this method or rethrow the "InterruptedException" that can be caught here.</span><span class="ms-auto">30 seconds ago</span><i class="caret"></i><span class="dk" style="margin:0 12px 0 10px">L52</span><svg width="15" height="15"><use href="#link"/></svg><svg style="margin:2px 0 0 15px" width="15" height="15"><use href="#filt"/></svg><i class="caret" style="margin-left:2px"></i></div>
            <div class="ln2 d-flex align-items-center"><svg style="margin:2px 7px 0 1px" width="17" height="18"><use href="#bug"/></svg>Bug<i class="caret"></i><svg style="margin:2px 7px 0 12px" width="15" height="15"><use href="#major"/></svg>Major<i class="caret"></i><svg style="margin:2px 8px 0 12px" width="15" height="15"><use href="#opn"/></svg>Open<i class="caret"></i><span style="margin-left:10px">Not assigned</span><i class="caret"></i><span class="dk" style="margin:0 10px">15min effort</span>Comment<svg class="ms-auto" style="margin-right:5px;margin-top:3px" width="18" height="15"><use href="#tags"/></svg>cwe, error-handling, multi-threading<i class="caret"></i></div></div></div>
          <div class="text-center gr" style="padding-top:2px">2 of 2 shown</div>
        </div>
        <footer class="foot text-center">SonarQube™ technology is powered by <a>SonarSource SA</a><br>Community Edition - v9.9.6 (build 92038) - <a><svg width="16" height="16"><use href="#ext"/></svg>LGPL v3</a> - <a><svg width="16" height="16"><use href="#ext"/></svg>Community</a> - <a><svg width="16" height="16"><use href="#ext"/></svg>Documentation</a> - <a><svg width="16" height="16"><use href="#ext"/></svg>Plugins</a> - <a>Web API</a></footer>
      </main>
    </div>
  </div>
  <div class="pscroll d-flex flex-column"><i class="aro" style="margin-left:3px;border-bottom-color:#a3a3a3;border-top:0"></i><i class="aro mt-auto" style="margin-left:3px;margin-bottom:4px;border-top-color:#a3a3a3;border-bottom:0"></i></div>
  </div>
</section>
</div>
</div>
</body>
</html>
